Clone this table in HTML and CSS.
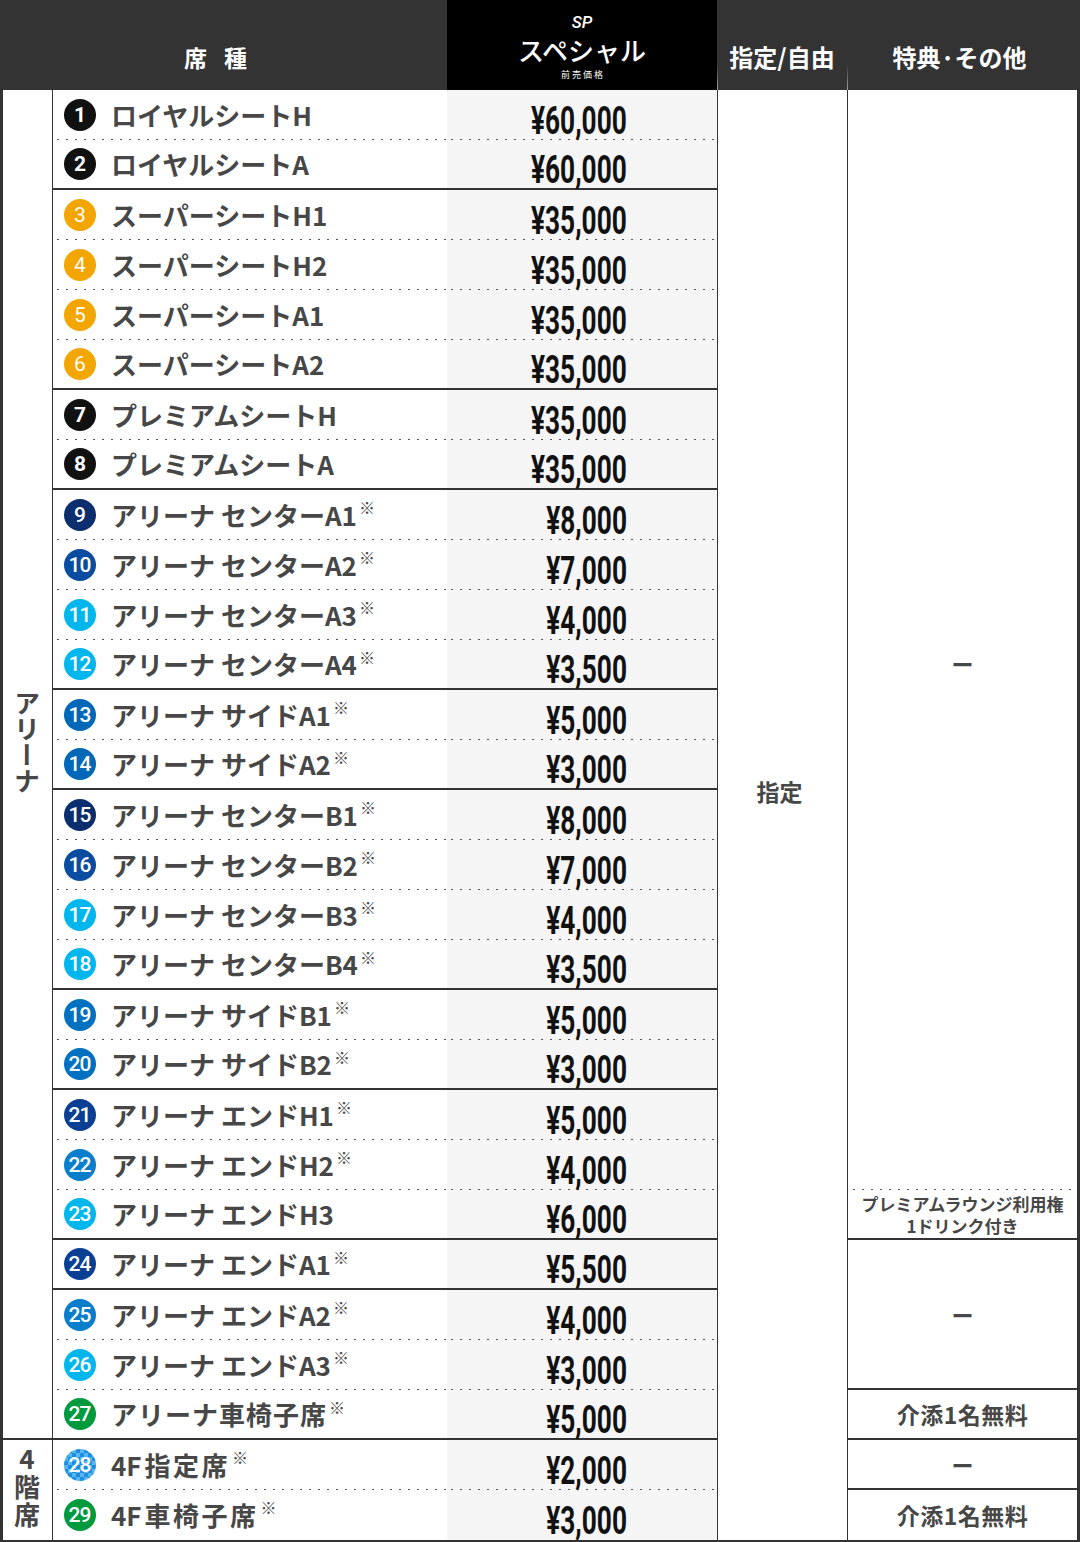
FILE: index.html
```html
<!DOCTYPE html>
<html lang="ja">
<head>
<meta charset="utf-8">
<title>席種</title>
<link rel="stylesheet" href="styles.css">
</head>
<body>
<div class="table">
  <div class="head">
    <div class="h h-seat">席 種</div>
    <div class="h h-sp"><span class="sp">SP</span><span class="sp-name">スペシャル</span><span class="sp-sub">前売価格</span></div>
    <div class="h h-spec edge">指定/自由</div>
    <div class="h h-note edge">特典·その他</div>
  </div>
  <div class="body">
    <div class="grp grp-arena"><span class="vert">アリーナ</span></div>
    <div class="grp grp-4f"><span class="vert upright">4階席</span></div>
    <div class="spec">指定</div>
    <div class="note n1 ndot"><span class="dash">ー</span></div>
    <div class="note n2 nsol"><span class="small">プレミアムラウンジ利用権<br>1ドリンク付き</span></div>
    <div class="note n3 nsol"><span class="dash">ー</span></div>
    <div class="note n4 nsol">介添1名無料</div>
    <div class="note n5 nsol"><span class="dash">ー</span></div>
    <div class="note n6">介添1名無料</div>

    <div class="name dot"><span class="num blk">1</span>ロイヤルシートH</div><div class="price dot"><span class="yen">¥60,000</span></div>
    <div class="name sol"><span class="num blk">2</span>ロイヤルシートA</div><div class="price sol"><span class="yen">¥60,000</span></div>
    <div class="name dot"><span class="num org">3</span>スーパーシートH1</div><div class="price dot"><span class="yen">¥35,000</span></div>
    <div class="name dot"><span class="num org">4</span>スーパーシートH2</div><div class="price dot"><span class="yen">¥35,000</span></div>
    <div class="name dot"><span class="num org">5</span>スーパーシートA1</div><div class="price dot"><span class="yen">¥35,000</span></div>
    <div class="name sol"><span class="num org">6</span>スーパーシートA2</div><div class="price sol"><span class="yen">¥35,000</span></div>
    <div class="name dot"><span class="num blk">7</span>プレミアムシートH</div><div class="price dot"><span class="yen">¥35,000</span></div>
    <div class="name sol"><span class="num blk">8</span>プレミアムシートA</div><div class="price sol"><span class="yen">¥35,000</span></div>
    <div class="name dot"><span class="num navy">9</span>アリーナ センターA1<span class="k">※</span></div><div class="price dot"><span class="yen">¥8,000</span></div>
    <div class="name dot"><span class="num blue">10</span>アリーナ センターA2<span class="k">※</span></div><div class="price dot"><span class="yen">¥7,000</span></div>
    <div class="name dot"><span class="num cyan">11</span>アリーナ センターA3<span class="k">※</span></div><div class="price dot"><span class="yen">¥4,000</span></div>
    <div class="name sol"><span class="num cyan">12</span>アリーナ センターA4<span class="k">※</span></div><div class="price sol"><span class="yen">¥3,500</span></div>
    <div class="name dot"><span class="num mid">13</span>アリーナ サイドA1<span class="k">※</span></div><div class="price dot"><span class="yen">¥5,000</span></div>
    <div class="name sol"><span class="num mid">14</span>アリーナ サイドA2<span class="k">※</span></div><div class="price sol"><span class="yen">¥3,000</span></div>
    <div class="name dot"><span class="num navy">15</span>アリーナ センターB1<span class="k">※</span></div><div class="price dot"><span class="yen">¥8,000</span></div>
    <div class="name dot"><span class="num blue">16</span>アリーナ センターB2<span class="k">※</span></div><div class="price dot"><span class="yen">¥7,000</span></div>
    <div class="name dot"><span class="num cyan">17</span>アリーナ センターB3<span class="k">※</span></div><div class="price dot"><span class="yen">¥4,000</span></div>
    <div class="name sol"><span class="num cyan">18</span>アリーナ センターB4<span class="k">※</span></div><div class="price sol"><span class="yen">¥3,500</span></div>
    <div class="name dot"><span class="num mid2">19</span>アリーナ サイドB1<span class="k">※</span></div><div class="price dot"><span class="yen">¥5,000</span></div>
    <div class="name sol"><span class="num mid2">20</span>アリーナ サイドB2<span class="k">※</span></div><div class="price sol"><span class="yen">¥3,000</span></div>
    <div class="name dot"><span class="num dblue">21</span>アリーナ エンドH1<span class="k">※</span></div><div class="price dot"><span class="yen">¥5,000</span></div>
    <div class="name dot"><span class="num lblue">22</span>アリーナ エンドH2<span class="k">※</span></div><div class="price dot"><span class="yen">¥4,000</span></div>
    <div class="name sol"><span class="num cyan">23</span>アリーナ エンドH3</div><div class="price sol"><span class="yen">¥6,000</span></div>
    <div class="name sol"><span class="num dblue">24</span>アリーナ エンドA1<span class="k">※</span></div><div class="price sol"><span class="yen">¥5,500</span></div>
    <div class="name dot"><span class="num lblue">25</span>アリーナ エンドA2<span class="k">※</span></div><div class="price dot"><span class="yen">¥4,000</span></div>
    <div class="name dot"><span class="num cyan">26</span>アリーナ エンドA3<span class="k">※</span></div><div class="price dot"><span class="yen">¥3,000</span></div>
    <div class="name sol ls1"><span class="num green">27</span>アリーナ車椅子席<span class="k">※</span></div><div class="price sol"><span class="yen">¥5,000</span></div>
    <div class="name dot"><span class="num check">28</span><span>4F<span class="kanji">指定席</span></span><span class="k">※</span></div><div class="price dot"><span class="yen">¥2,000</span></div>
    <div class="name"><span class="num green">29</span><span>4F<span class="kanji">車椅子席</span></span><span class="k">※</span></div><div class="price"><span class="yen">¥3,000</span></div>
  </div>
</div>
</body>
</html>
```

FILE: styles.css
```css
* { box-sizing: border-box; }
html, body { margin: 0; padding: 0; background: #ffffff; }
body {
  width: 1080px;
  height: 1542px;
  overflow: hidden;
  font-family: "Noto Sans CJK JP", "Noto Sans", sans-serif;
  color: #474747;
}
.table { width: 1080px; }

/* header */
.head {
  display: grid;
  grid-template-columns: 447px 270px 130px 233px;
  height: 90px;
  background: #333333;
  color: #ffffff;
}
.h {
  display: flex;
  align-items: center;
  justify-content: center;
  padding-top: 24px;
  font-weight: 700;
  font-size: 24px;
  line-height: 26px;
}
.h-seat { letter-spacing: 6px; padding-right: 10px; font-size: 23px; }
.h-sp {
  background: #000000;
  flex-direction: column;
  justify-content: flex-start;
  padding-top: 12px;
  font-weight: 500;
}
.edge {
  background-image: linear-gradient(to bottom, rgba(255,255,255,0), rgba(255,255,255,0.55));
  background-size: 1px 26px;
  background-position: left bottom;
  background-repeat: no-repeat;
}
.h-spec { padding-right: 0; }
.h-note { padding-left: 0; padding-right: 8px; }
.sp {
  font-family: "Roboto", "Liberation Sans", sans-serif;
  font-style: italic;
  font-size: 17px;
  line-height: 20px;
  font-weight: 500;
}
.sp-name {
  font-size: 26px;
  line-height: 36px;
  font-weight: 500;
}
.sp-sub {
  font-size: 9px;
  line-height: 14px;
  letter-spacing: 2px;
  font-weight: 400;
  padding-left: 2px;
}

/* body grid */
.body {
  display: grid;
  grid-template-columns: 50px 394px 270px 130px 230px;
  grid-template-rows: repeat(29, 50px);
  border-left: 3px solid #333333;
  border-right: 3px solid #333333;
  border-bottom: 2px solid #333333;
}

.grp {
  grid-column: 1;
  border-right: 1px solid #333333;
  display: flex;
  align-items: center;
  justify-content: center;
  font-weight: 700;
  font-size: 26px;
  color: #474747;
}
.grp-arena {
  grid-row: 1 / 28;
  border-bottom: 2px solid #333333;
  padding-bottom: 44px;
}
.vert { writing-mode: vertical-rl; line-height: 26px; padding-right: 2px; }
.upright { text-orientation: upright; letter-spacing: 2px; padding-top: 0; }
.grp-4f {
  grid-row: 28 / 30;
  padding-bottom: 4px;
}

.spec {
  grid-column: 4;
  grid-row: 1 / 30;
  border-left: 1px solid #333333;
  display: flex;
  align-items: center;
  justify-content: center;
  padding-bottom: 48px;
  padding-right: 6px;
  font-weight: 700;
  font-size: 23px;
  color: #474747;
}

.note {
  grid-column: 5;
  border-left: 1px solid #333333;
  display: flex;
  align-items: center;
  justify-content: center;
  font-weight: 700;
  font-size: 23px;
  letter-spacing: 0.5px;
  color: #474747;
  text-align: center;
}
.n1 { grid-row: 1 / 23; padding-top: 45px; }
.n2 { grid-row: 23 / 24; }
.n3 { grid-row: 24 / 27; }
.n4 { grid-row: 27 / 28; }
.n5 { grid-row: 28 / 29; }
.n6 { grid-row: 29 / 30; }
.nsol { border-bottom: 2px solid #333333; }
.ndot {
  background-image: repeating-linear-gradient(90deg, #555555 0 2px, transparent 2px 9px);
  background-size: calc(100% - 8px) 1px;
  background-position: 5px 100%;
  background-repeat: no-repeat;
}
.dash { font-size: 22px; letter-spacing: 0; }
.small { font-size: 17px; line-height: 22px; letter-spacing: 0; padding-top: 2px; }

/* rows */
.name {
  grid-column: 2;
  display: flex;
  align-items: center;
  gap: 15px;
  padding-left: 11px;
  font-weight: 700;
  font-size: 26px;
  line-height: 30px;
  color: #474747;
  white-space: nowrap;
}
.ls1 { letter-spacing: 1px; }
.kanji { letter-spacing: 2.5px; margin-left: 3px; }
.price {
  grid-column: 3;
  background-color: #f5f5f5;
  display: flex;
  align-items: center;
  justify-content: flex-end;
  padding-right: 90px;
  padding-top: 12px;
}
.yen {
  display: inline-block;
  font-family: "Roboto", "Liberation Sans", sans-serif;
  font-weight: 700;
  font-size: 38px;
  line-height: 1;
  color: #111111;
  transform: scaleX(0.69);
  transform-origin: right center;
}
.dot {
  background-image: repeating-linear-gradient(90deg, #555555 0 2px, transparent 2px 9px);
  background-size: 100% 1px;
  background-position: 4px 100%;
  background-repeat: no-repeat;
}
.sol { border-bottom: 2px solid #333333; }

.k {
  font-size: 16px;
  line-height: 16px;
  align-self: flex-start;
  margin-top: 9px;
  margin-left: -13px;
  letter-spacing: 0;
  font-weight: 700;
}

.num {
  flex: 0 0 32px;
  width: 32px;
  height: 32px;
  border-radius: 50%;
  display: flex;
  align-items: center;
  justify-content: center;
  color: #ffffff;
  font-family: "Roboto", "Liberation Sans", sans-serif;
  font-weight: 500;
  font-size: 21px;
  letter-spacing: -1px;
  line-height: 1;
  padding-right: 1px;
}
.blk { background: #111111; font-weight: 700; }
.org { background: #f3a600; font-weight: 400; }
.navy { background: #0c2e6e; }
.blue { background: #0a4c9f; }
.cyan { background: #00b6ec; }
.mid { background: #0068b7; }
.mid2 { background: #0071c1; }
.dblue { background: #0a3f93; }
.lblue { background: #0a7ecb; }
.green { background: #009a3e; }
.check {
  background-color: #1c8ddf;
  background-image: conic-gradient(#1c8ddf 25%, #58b6ef 0 50%, #1c8ddf 0 75%, #58b6ef 0);
  background-size: 8px 8px;
}
```
